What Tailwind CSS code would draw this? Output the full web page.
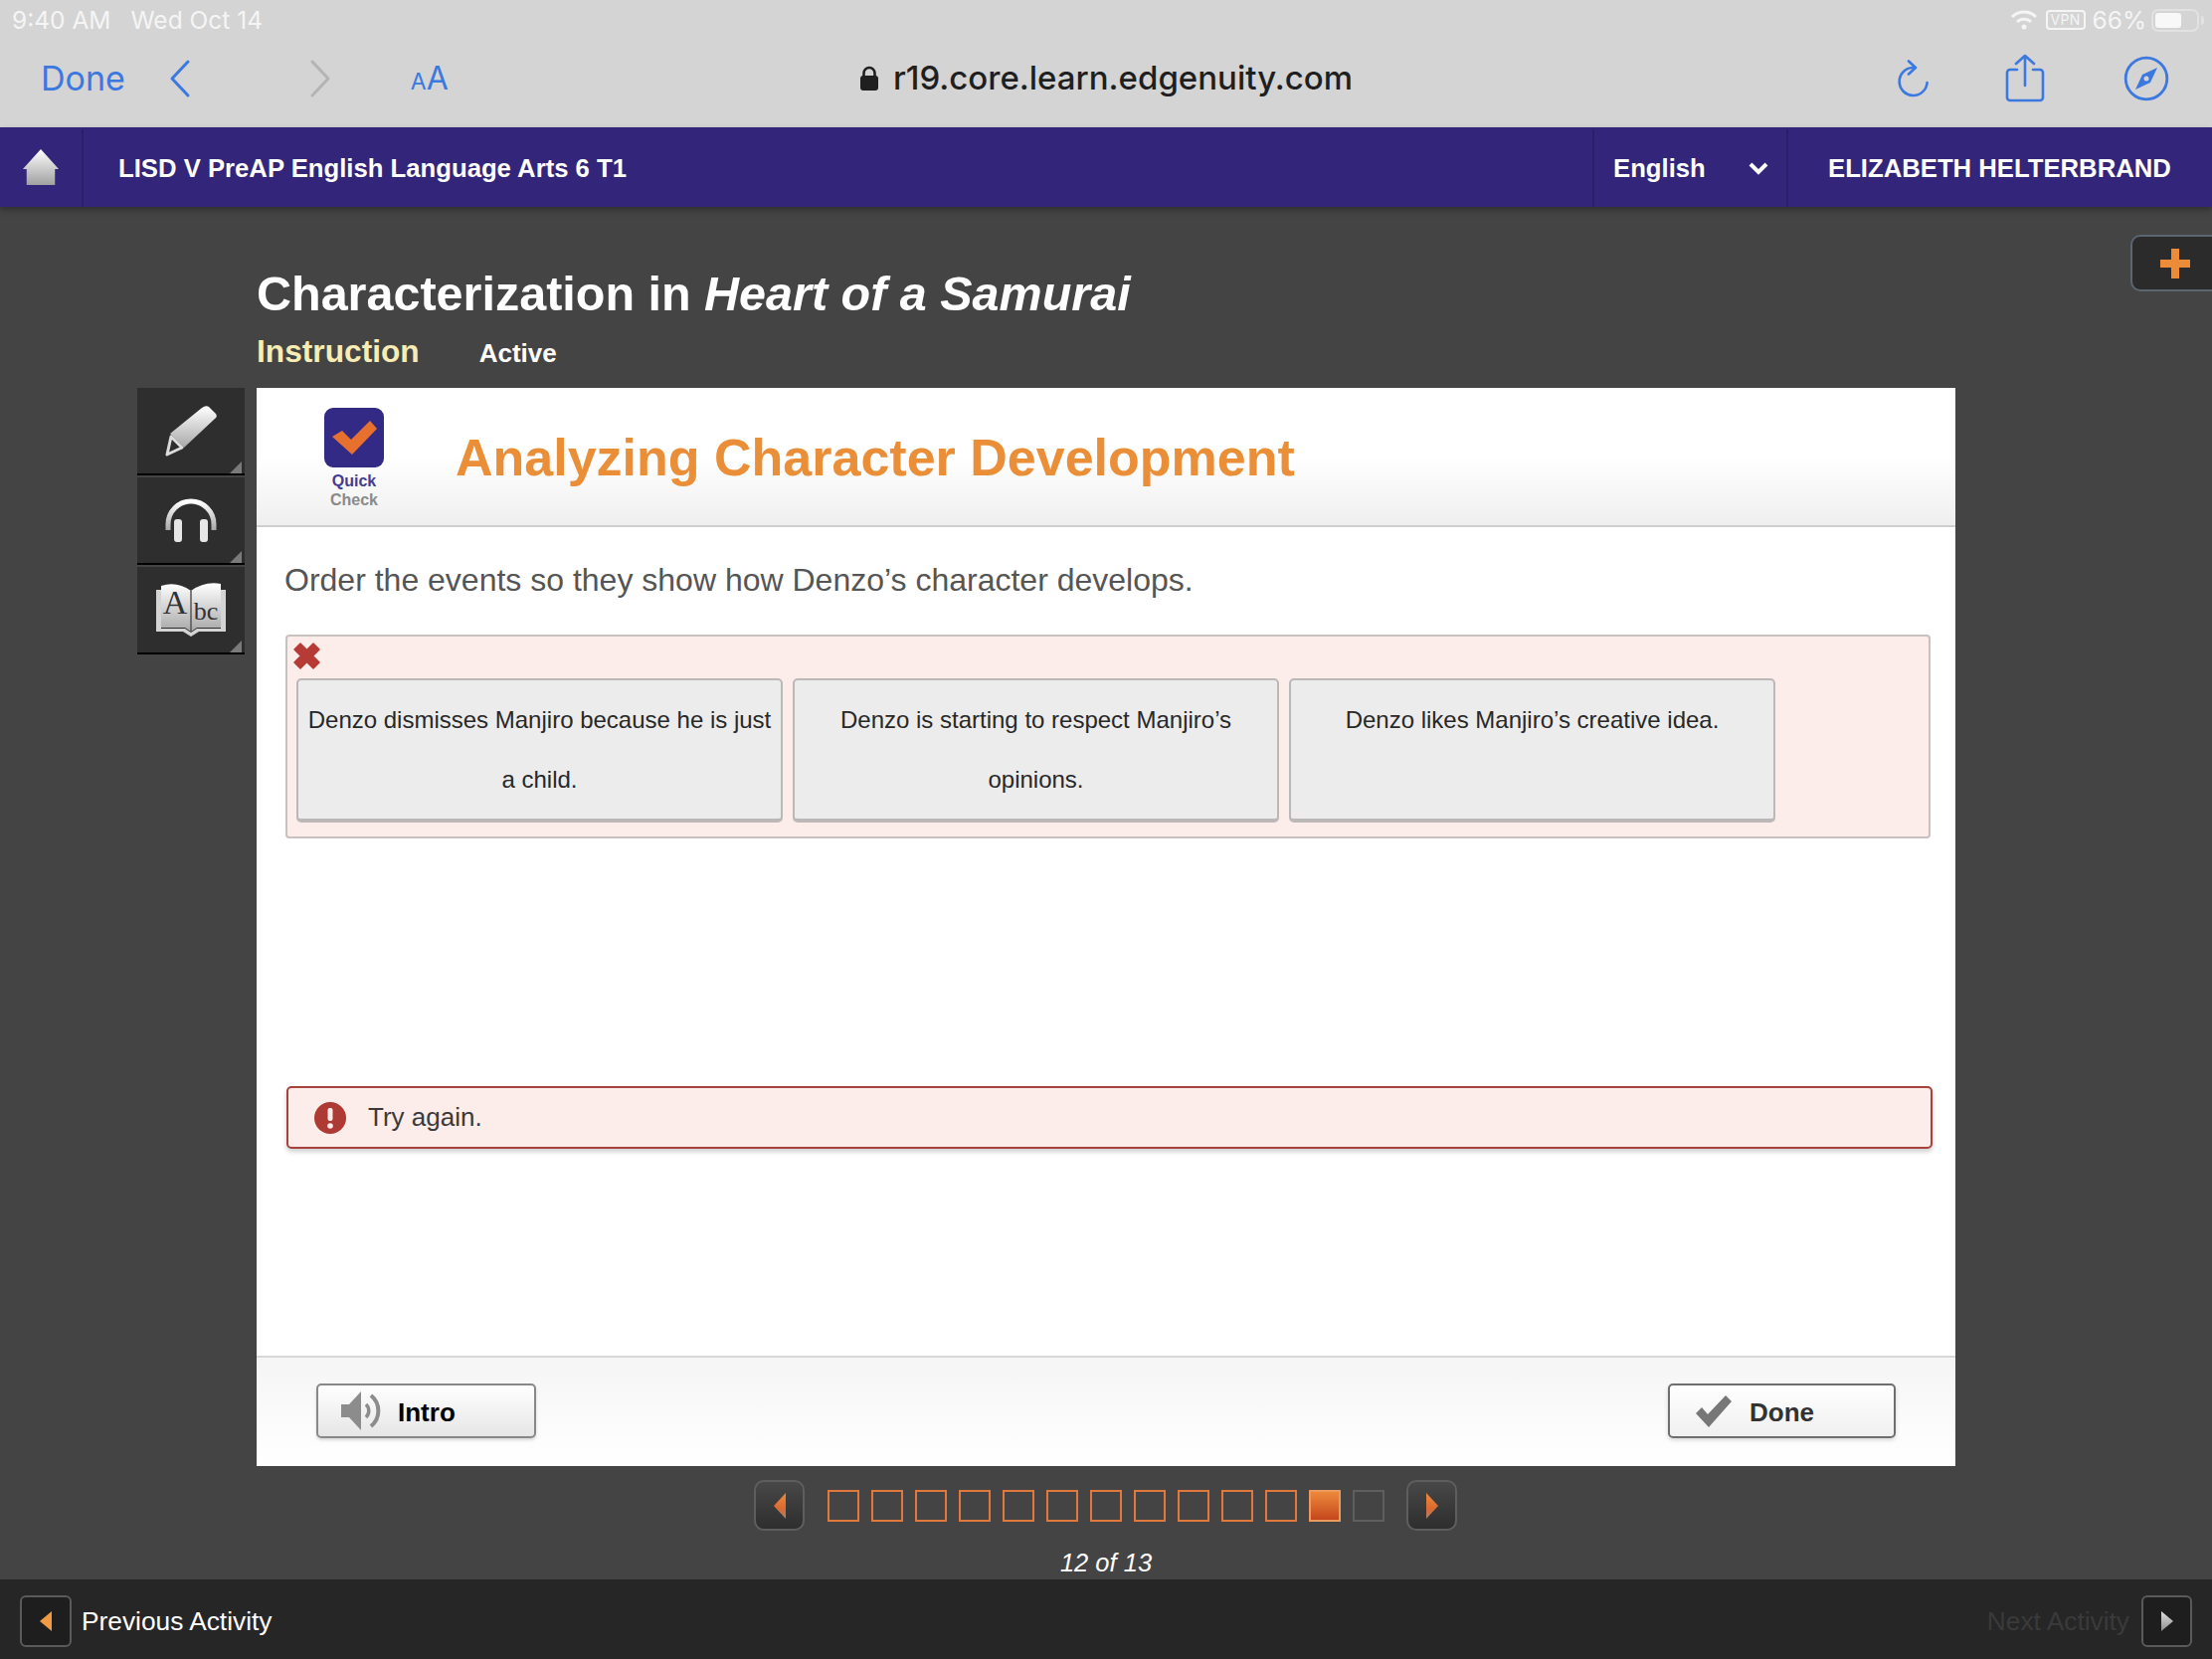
<!DOCTYPE html>
<html lang="en">
<head>
    <meta charset="UTF-8">
    <title>Characterization in Heart of a Samurai</title>
    <script src="https://cdn.jsdelivr.net/npm/@tailwindcss/browser@4"></script>
</head>
<body class="w-[2224px] h-[1668px] overflow-hidden flex flex-col bg-[#444444] font-['Liberation_Sans',Arial,sans-serif]">
    <!-- Safari chrome -->
    <div class="h-[128px] bg-[#d4d4d4] flex flex-col font-['Inter',sans-serif]">
        <div class="h-[40px] flex items-center pl-[12px] pr-[8px] text-[#f5f5f5] text-[24.500px] leading-none">
            <span>9:40 AM</span>
            <span class="ml-[20px]">Wed Oct 14</span>
            <div class="ml-auto flex items-center">
                <svg class="w-[28px] h-[22px]" viewBox="0 0 28 22" fill="none" stroke="#f5f5f5" stroke-width="3"><path d="M2 8a17 17 0 0 1 24 0"/><path d="M7 13a10 10 0 0 1 14 0"/><circle cx="14" cy="18" r="2.5" fill="#f5f5f5" stroke="none"/></svg>
                <span class="ml-[8px] w-[40px] h-[20px] border-2 border-[#f5f5f5] rounded-[4px] flex items-center justify-center text-[14px] tracking-wide">VPN</span>
                <span class="ml-[7px]">66%</span>
                <div class="ml-[5px] w-[48px] h-[23px] border-2 border-[#e2e2e2] rounded-[7px] p-[2px]"><div class="w-[26px] h-full bg-[#f8f8f8] rounded-[3px]"></div></div>
                <div class="ml-[2px] w-[3px] h-[9px] bg-[#e2e2e2] rounded-r"></div>
            </div>
        </div>
        <div class="flex-1 pb-[11px] grid grid-cols-[1fr_auto_1fr] items-center">
            <div class="flex items-center pl-[41px] text-[#3b78e0]">
                <span class="text-[34px] leading-none">Done</span>
                <svg class="ml-[43px] w-[24px] h-[40px]" viewBox="0 0 24 40" fill="none" stroke="currentColor" stroke-width="3" stroke-linecap="round" stroke-linejoin="round"><path d="M20 3 4 20l16 17"/></svg>
                <svg class="ml-[117px] w-[24px] h-[40px]" viewBox="0 0 24 40" fill="none" stroke="#b4b4b4" stroke-width="3" stroke-linecap="round" stroke-linejoin="round"><path d="m4 3 16 17L4 37"/></svg>
                <span class="ml-[79px] flex items-baseline leading-none"><span class="text-[23px]">A</span><span class="text-[32px]">A</span></span>
            </div>
            <div class="flex items-center text-[#1f1f1f] text-[33px] font-medium leading-none">
                <svg class="w-[20px] h-[26px] mr-[14px]" viewBox="0 0 20 26"><path d="M4.5 11V7.5a5.5 5.5 0 0 1 11 0V11" fill="none" stroke="#1f1f1f" stroke-width="2.6"/><rect x="1" y="10" width="18" height="15" rx="3" fill="#1f1f1f"/></svg>
                <span>r19.core.learn.edgenuity.com</span>
            </div>
            <div class="flex items-center justify-end pr-[43px] text-[#3b78e0]">
                <svg class="w-[34px] h-[38px]" viewBox="0 0 34 38" fill="none" stroke="currentColor" stroke-width="2.6" stroke-linecap="round" stroke-linejoin="round"><path d="M17 8a14 14 0 1 0 14.6 15"/><path d="m13 1.5 7 6.500-7 6.500"/></svg>
                <svg class="ml-[76px] w-[40px] h-[50px]" viewBox="0 0 40 50" fill="none" stroke="currentColor" stroke-width="2.6" stroke-linecap="round" stroke-linejoin="round"><path d="M12 16H5a3 3 0 0 0-3 3v25a3 3 0 0 0 3 3h30a3 3 0 0 0 3-3V19a3 3 0 0 0-3-3h-7"/><path d="M20 32V2M11 10l9-8 9 8"/></svg>
                <svg class="ml-[79px] w-[46px] h-[46px]" viewBox="0 0 46 46"><circle cx="23" cy="23" r="20.800" fill="none" stroke="currentColor" stroke-width="2.800"/><path d="M34 12 27 27 12 34 19 19Z" fill="currentColor"/><circle cx="23" cy="23" r="2.500" fill="#d4d4d4"/></svg>
            </div>
        </div>
    </div>

    <!-- Course nav -->
    <div class="h-[80px] pt-[2px] bg-[#32257a] flex items-center text-white font-bold text-[25.700px] shadow-[0_3px_6px_rgba(0,0,0,0.3)] z-10">
        <div class="w-[84px] h-full flex items-center justify-center border-r-2 border-[#2a1f68]">
            <svg class="w-[38px] h-[40px]" viewBox="0 0 40 42"><defs><linearGradient id="homeGrad" x1="0" y1="0" x2="0" y2="1"><stop offset="0" stop-color="#ffffff"/><stop offset="1" stop-color="#a0a0a0"/></linearGradient></defs><path d="M20 1 39 22H35V39H5V22H1Z" fill="url(#homeGrad)"/></svg>
        </div>
        <span class="ml-[35px]">LISD V PreAP English Language Arts 6 T1</span>
        <div class="ml-auto w-[195px] h-full flex items-center pl-[19px] border-l-2 border-[#2a1f68]">
            <span>English</span>
            <svg class="ml-[43px] w-[20px] h-[14px]" viewBox="0 0 20 14" fill="none" stroke="#ffffff" stroke-width="4"><path d="m2 3 8 8 8-8"/></svg>
        </div>
        <div class="w-[428px] h-full flex items-center pl-[40px] border-l-2 border-[#2a1f68]">ELIZABETH HELTERBRAND</div>
    </div>

    <!-- Main -->
    <div class="relative h-[1380px] bg-[#444444] pl-[138px]">
        <div class="absolute right-0 top-[28px] w-[82px] h-[57px] bg-[#2b2b2b] border-2 border-r-0 border-[#5c6670] rounded-l-[10px] flex items-center pl-[28px]">
            <svg class="w-[30px] h-[30px]" viewBox="0 0 30 30"><path d="M11 0h8v11h11v8H19v11h-8V19H0v-8h11Z" fill="#ec8c38"/></svg>
        </div>

        <div class="pl-[120px] h-[182px] text-white">
            <h1 class="pt-[59px] text-[48.500px] leading-[56px] font-bold">Characterization in <em>Heart of a Samurai</em></h1>
            <div class="mt-[7px] flex items-baseline">
                <span class="text-[31.700px] font-bold text-[#f6ecb4]">Instruction</span>
                <span class="ml-[60px] text-[26px] font-bold">Active</span>
            </div>
        </div>

        <div class="flex">
            <!-- Tools -->
            <div class="w-[108px] mr-[12px] flex flex-col gap-[2px]">
                <div class="relative h-[88px] bg-[#2e2e2e] border-b-2 border-black flex items-center justify-center">
                    <svg class="w-[52px] h-[52px]" viewBox="0 0 52 52"><defs><linearGradient id="toolGrad" x1="0" y1="0" x2="0" y2="1"><stop offset="0" stop-color="#ffffff"/><stop offset="1" stop-color="#a8a8a8"/></linearGradient></defs><path d="M37 3Q41 0 44 2L51 9Q53 12 50 14L19 43 5 29Z" fill="url(#toolGrad)"/><path d="M6 32 17 43 2 50Z" fill="none" stroke="#dcdcdc" stroke-width="3" stroke-linejoin="round"/></svg>
                    <svg class="absolute right-[3px] bottom-0 w-[12px] h-[12px]" viewBox="0 0 12 12"><path d="M12 0V12H0Z" fill="#7a7a7a"/></svg>
                </div>
                <div class="relative h-[88px] bg-[#2e2e2e] border-b-2 border-black flex items-center justify-center">
                    <svg class="w-[54px] h-[44px]" viewBox="0 0 54 44" fill="none"><path d="M4 32V26a23 23 0 0 1 46 0V32" stroke="url(#toolGrad)" stroke-width="5"/><rect x="10" y="21" width="8" height="23" rx="3" fill="#e6e6e6"/><rect x="36" y="21" width="8" height="23" rx="3" fill="#e6e6e6"/></svg>
                    <svg class="absolute right-[3px] bottom-0 w-[12px] h-[12px]" viewBox="0 0 12 12"><path d="M12 0V12H0Z" fill="#7a7a7a"/></svg>
                </div>
                <div class="relative h-[88px] bg-[#2e2e2e] border-b-2 border-black flex items-center justify-center">
                    <svg class="w-[72px] h-[54px]" viewBox="0 0 72 54"><path d="M1 7H6V46H30L36 50 42 46H66V7H71V49H44L36 54 28 49H1Z" fill="#d4d4d4"/><path d="M6 3Q22 -2 36 8 50 -2 66 1V45H42L36 49 30 45H6Z" fill="url(#toolGrad)"/><path d="M36 8V49" stroke="#555555" stroke-width="1.500"/><text x="20" y="31" text-anchor="middle" font-family="Liberation Serif" font-size="34" fill="#333333">A</text><text x="51" y="37" text-anchor="middle" font-family="Liberation Serif" font-size="26" fill="#333333">bc</text></svg>
                    <svg class="absolute right-[3px] bottom-0 w-[12px] h-[12px]" viewBox="0 0 12 12"><path d="M12 0V12H0Z" fill="#7a7a7a"/></svg>
                </div>
            </div>

            <!-- Activity panel -->
            <div class="w-[1708px] h-[1084px] bg-white flex flex-col">
                <div class="h-[140px] border-b-2 border-[#cfcfcf] bg-linear-to-b from-white from-50% to-[#efefef] flex items-center">
                    <div class="self-start mt-[20px] ml-[68px] w-[60px] flex flex-col items-center">
                        <svg class="w-[60px] h-[60px]" viewBox="0 0 60 60"><rect width="60" height="60" rx="9" fill="#332a85"/><path d="M8 29 18 23 27 32 46 13 53 21 28 47Z" fill="#e8702f"/></svg>
                        <span class="mt-[4px] text-[16px] leading-[19px] font-bold text-[#443c90]">Quick</span>
                        <span class="text-[16px] leading-[20px] font-bold text-[#8a8a8a]">Check</span>
                    </div>
                    <h2 class="ml-[72px] pt-[2px] text-[52px] font-bold text-[#ea8e38]">Analyzing Character Development</h2>
                </div>

                <div class="flex-1 pl-[28px]">
                    <p class="mt-[34px] text-[32px] leading-[38px] text-[#555555]">Order the events so they show how Denzo’s character develops.</p>
                    <div class="ml-px mt-[36px] w-[1654px] h-[205px] bg-[#fcecea] border-2 border-[#c9c0c0] rounded-[4px] pl-[9px]">
                        <svg class="ml-[-3px] mt-[6px] w-[27px] h-[27px]" viewBox="0 0 27 27"><path d="M7 1 13.500 7.500 20 1 26 7 19.500 13.500 26 20 20 26 13.500 19.500 7 26 1 20 7.500 13.500 1 7Z" fill="#b63a36" stroke="#b63a36" stroke-width="1.500" stroke-linejoin="round"/></svg>
                        <div class="mt-[9px] flex gap-[10px] text-[24px] leading-[60px] text-center text-[#282828]">
                            <div class="w-[489px] h-[145px] bg-[#ececec] border-2 border-b-4 border-[#bcb8b8] rounded-[5px] pt-[10px] px-[8px]">Denzo dismisses Manjiro because he is just a child.</div>
                            <div class="w-[489px] h-[145px] bg-[#ececec] border-2 border-b-4 border-[#bcb8b8] rounded-[5px] pt-[10px] px-[8px]">Denzo is starting to respect Manjiro’s opinions.</div>
                            <div class="w-[489px] h-[145px] bg-[#ececec] border-2 border-b-4 border-[#bcb8b8] rounded-[5px] pt-[10px] px-[8px]">Denzo likes Manjiro’s creative idea.</div>
                        </div>
                    </div>
                    <div class="ml-[2px] mt-[249px] w-[1655px] h-[63px] bg-[#fcecea] border-2 border-[#a8423c] rounded-[5px] shadow-[0_3px_5px_rgba(0,0,0,0.2)] flex items-center pl-[26px] text-[26px] text-[#3a3a3a]">
                        <svg class="w-[32px] h-[32px]" viewBox="0 0 32 32"><circle cx="16" cy="16" r="16" fill="#ad3a33"/><rect x="13.500" y="6" width="5" height="13" rx="2" fill="#fbebe9"/><circle cx="16" cy="24" r="2.800" fill="#fbebe9"/></svg>
                        <span class="ml-[22px]">Try again.</span>
                    </div>
                </div>

                <div class="h-[111px] border-t-2 border-[#d8d8d8] bg-linear-to-b from-[#f5f5f5] to-white px-[60px] pt-[26px] flex justify-between items-start text-[26px] font-bold">
                    <div class="w-[221px] h-[55px] border-2 border-[#888888] rounded-[5px] bg-linear-to-b from-white to-[#e6e6e6] shadow-[0_2px_3px_rgba(0,0,0,0.15)] flex items-center pl-[23px] text-black">
                        <svg class="w-[41px] h-[41px]" viewBox="0 0 41 41" fill="none"><path d="M0 14H8L20 1V40L8 27H0Z" fill="#8c8c8c"/><path d="M25 14a9 9 0 0 1 0 13" stroke="#8c8c8c" stroke-width="3.500"/><path d="M30 5a20 20 0 0 1 0 31" stroke="#8c8c8c" stroke-width="4"/></svg>
                        <span class="ml-[16px] pt-[3px]">Intro</span>
                    </div>
                    <div class="w-[229px] h-[55px] border-2 border-[#6e6e6e] rounded-[5px] bg-linear-to-b from-white to-[#f0f0f0] shadow-[0_2px_4px_rgba(0,0,0,0.15)] flex items-center pl-[25px] text-[#333333]">
                        <svg class="w-[38px] h-[34px]" viewBox="0 0 38 34"><path d="M1 19 7 13 13 20 31 1 37 7 14 33Z" fill="#777777"/></svg>
                        <span class="ml-[17px] pt-[3px]">Done</span>
                    </div>
                </div>
            </div>
        </div>

        <!-- Question pager -->
        <div class="ml-[620px] mt-[14px] w-[707px] flex items-center justify-between">
            <div class="w-[51px] h-[51px] rounded-[10px] border-2 border-[#5e5e5e] bg-linear-to-b from-[#484848] to-[#2e2e2e] flex items-center justify-center">
                <svg class="w-[12px] h-[26px]" viewBox="0 0 12 26"><defs><linearGradient id="pageGrad" x1="0" y1="0" x2="0" y2="1"><stop offset="0" stop-color="#ec8a3c"/><stop offset="0.6" stop-color="#dc6a30"/><stop offset="1" stop-color="#a8806c"/></linearGradient></defs><path d="M12 0V26L0 13Z" fill="url(#pageGrad)"/></svg>
            </div>
            <div class="flex gap-[12px]">
                <div class="w-[32px] h-[32px] border-2 border-[#e0793b]"></div>
                <div class="w-[32px] h-[32px] border-2 border-[#e0793b]"></div>
                <div class="w-[32px] h-[32px] border-2 border-[#e0793b]"></div>
                <div class="w-[32px] h-[32px] border-2 border-[#e0793b]"></div>
                <div class="w-[32px] h-[32px] border-2 border-[#e0793b]"></div>
                <div class="w-[32px] h-[32px] border-2 border-[#e0793b]"></div>
                <div class="w-[32px] h-[32px] border-2 border-[#e0793b]"></div>
                <div class="w-[32px] h-[32px] border-2 border-[#e0793b]"></div>
                <div class="w-[32px] h-[32px] border-2 border-[#e0793b]"></div>
                <div class="w-[32px] h-[32px] border-2 border-[#e0793b]"></div>
                <div class="w-[32px] h-[32px] border-2 border-[#e0793b]"></div>
                <div class="w-[32px] h-[32px] border-2 border-[#ea9a5c] bg-linear-to-b from-[#ec883c] to-[#c4461c]"></div>
                <div class="w-[32px] h-[32px] border-2 border-[#5e5e5e]"></div>
            </div>
            <div class="w-[51px] h-[51px] rounded-[10px] border-2 border-[#5e5e5e] bg-linear-to-b from-[#484848] to-[#2e2e2e] flex items-center justify-center">
                <svg class="w-[12px] h-[26px]" viewBox="0 0 12 26"><path d="M0 0V26L12 13Z" fill="url(#pageGrad)"/></svg>
            </div>
        </div>
        <p class="ml-[-138px] mt-[17px] text-center text-[25.500px] leading-[30px] italic text-white">12 of 13</p>
    </div>

    <!-- Activity footer -->
    <div class="flex-1 bg-[#262626] flex items-center px-[20px] pt-[4px] text-[26.300px] text-white">
        <div class="w-[52px] h-[52px] border-2 border-[#5a5a5a] rounded-[6px] bg-[#1e1e1e] flex items-center justify-center">
            <svg class="w-[12px] h-[20px]" viewBox="0 0 12 20"><path d="M12 0V20L0 10Z" fill="#f09a44"/></svg>
        </div>
        <span class="ml-[10px] pt-[2px]">Previous Activity</span>
        <span class="ml-auto mr-[12px] pt-[2px] text-[#3a3a3a]">Next Activity</span>
        <div class="w-[51px] h-[52px] border-2 border-[#5a5a5a] rounded-[6px] bg-[#1e1e1e] flex items-center justify-center">
            <svg class="w-[12px] h-[20px]" viewBox="0 0 12 20"><defs><linearGradient id="nextGrad" x1="0" y1="0" x2="0" y2="1"><stop offset="0" stop-color="#e0e0e0"/><stop offset="1" stop-color="#8c8c8c"/></linearGradient></defs><path d="M0 0V20L12 10Z" fill="url(#nextGrad)"/></svg>
        </div>
    </div>
</body>
</html>
